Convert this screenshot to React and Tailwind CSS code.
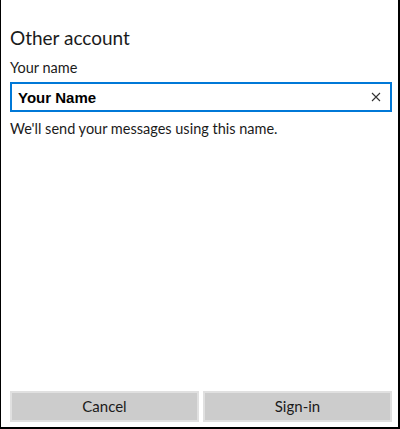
import React, { useState } from "react";

export default function App() {
  const [name, setName] = useState("Your Name");

  return (
    <div
      className="flex flex-col h-[429px] w-[400px] bg-white border-l border-r-2 border-b-2 border-black pl-[9px] pr-[6px] text-[#1b1b1b]"
      style={{ fontFamily: 'Lato, "Noto Sans", sans-serif' }}
    >
      <h1 className="text-[19px] leading-[26px] font-normal mt-[25px]">
        Other account
      </h1>
      <label className="text-[14.5px] leading-[20px] mt-[7px]">Your name</label>
      <div className="flex items-center h-[30px] mt-[4px] border-2 border-[#0078d7] pl-[6px] pr-[8px]">
        <input
          className="flex-1 min-w-0 outline-none text-[15px] leading-[20px] pt-[2px] font-bold text-black bg-transparent"
          style={{ fontFamily: '"Liberation Sans", Arial, sans-serif' }}
          value={name}
          onChange={(e) => setName(e.target.value)}
        />
        <button
          className="w-[12px] h-[12px] flex items-center justify-center text-[#333]"
          onClick={() => setName("")}
        >
          <svg width="10" height="10" viewBox="0 0 10 10" fill="none" stroke="currentColor" strokeWidth="1.1">
            <path d="M1 1 L9 9 M9 1 L1 9" />
          </svg>
        </button>
      </div>
      <p className="text-[14.5px] leading-[20px] mt-[7px]">
        We'll send your messages using this name.
      </p>

      <div className="mt-auto mb-[5px] grid grid-cols-2 gap-[4px]">
        <button className="h-[31px] bg-[#cccccc] border-2 border-[#e0e0e0] text-[15px]">
          Cancel
        </button>
        <button className="h-[31px] bg-[#cccccc] border-2 border-[#e0e0e0] text-[15px]">
          Sign-in
        </button>
      </div>
    </div>
  );
}
